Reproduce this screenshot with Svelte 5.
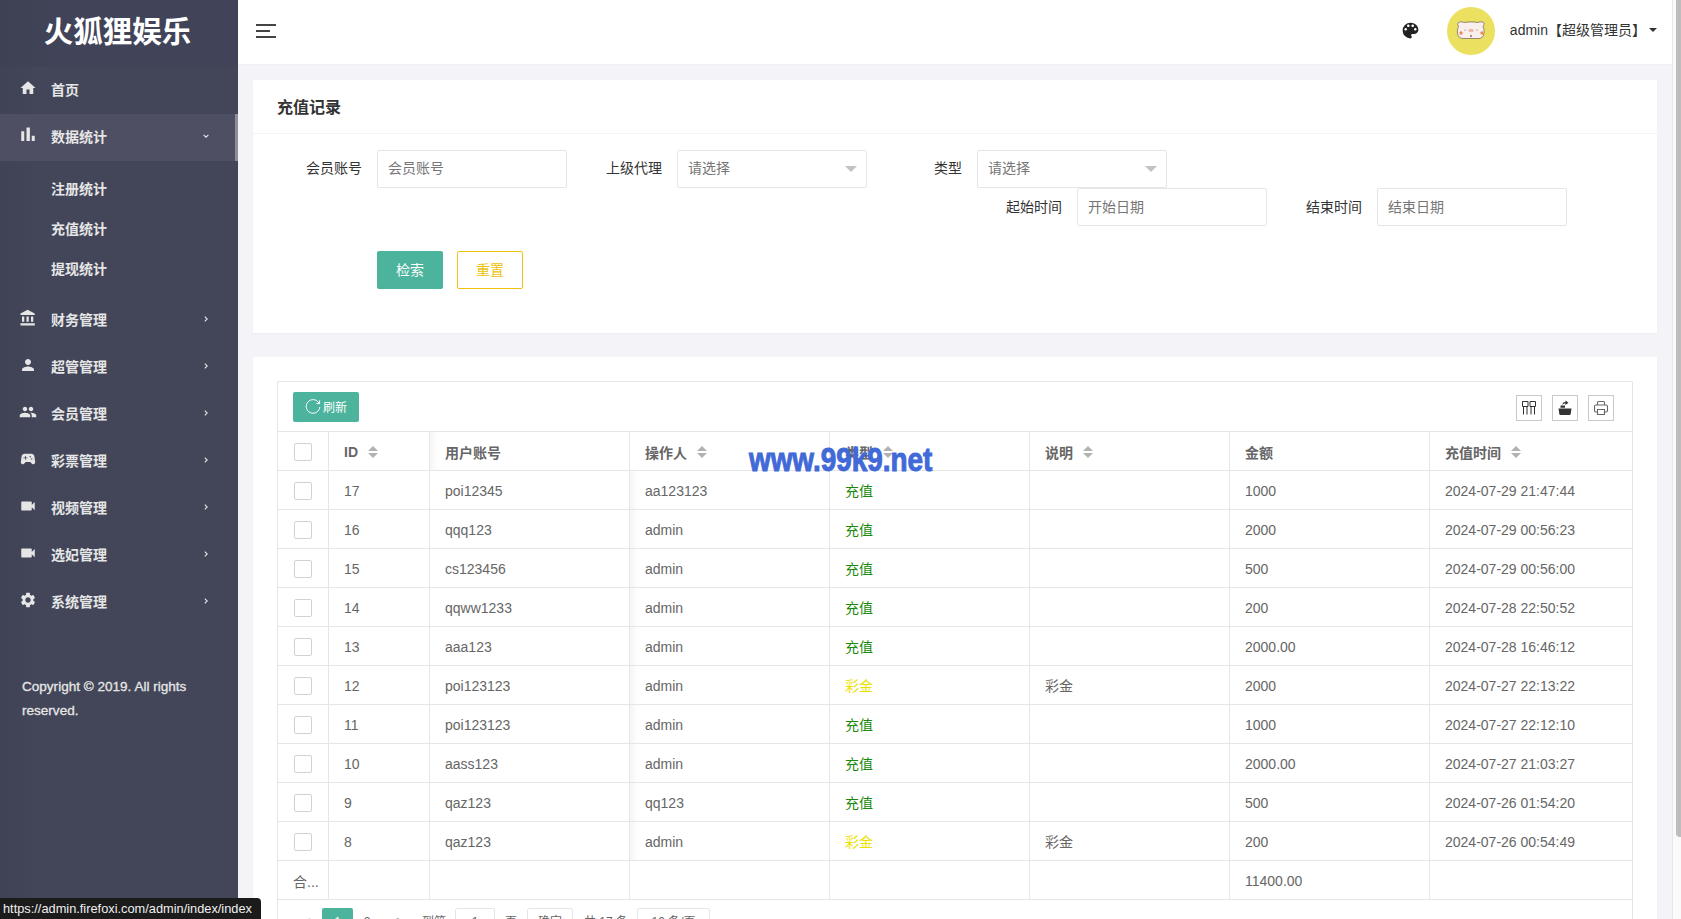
<script>
  const icons = {
    home: "M10 20v-6h4v6h5v-8h3L12 3 2 12h3v8z",
    chart: "M3 7h4v13H3zM10 2h4.500v18H10zM17 13h4v7h-4z",
    bank: "M4 10v7h3v-7H4zm6 0v7h3v-7h-3zM2 22h19v-3H2v3zm14-12v7h3v-7h-3zm-4.5-9L2 6v2h19V6l-9.5-5z",
    person: "M12 12c2.21 0 4-1.79 4-4s-1.79-4-4-4-4 1.79-4 4 1.79 4 4 4zm0 2c-2.67 0-8 1.34-8 4v2h16v-2c0-2.66-5.33-4-8-4z",
    people: "M16 11c1.66 0 2.99-1.34 2.99-3S17.66 5 16 5c-1.66 0-3 1.34-3 3s1.34 3 3 3zm-8 0c1.66 0 2.99-1.34 2.99-3S9.66 5 8 5C6.34 5 5 6.34 5 8s1.34 3 3 3zm0 2c-2.33 0-7 1.17-7 3.5V19h14v-2.5c0-2.33-4.67-3.5-7-3.5zm8 0c-.29 0-.62.02-.97.05 1.16.84 1.97 1.97 1.97 3.45V19h6v-2.5c0-2.33-4.67-3.5-7-3.5z",
    game: "M21.58 16.09l-1.09-7.66C20.21 6.46 18.52 5 16.53 5H7.47C5.48 5 3.79 6.46 3.51 8.43l-1.09 7.66C2.2 17.63 3.39 19 4.94 19c.68 0 1.32-.27 1.8-.75L9 16h6l2.25 2.25c.48.48 1.13.75 1.8.75 1.56 0 2.75-1.37 2.53-2.91zM11 11H9v2H8v-2H6v-1h2V8h1v2h2v1zm4-1c-.55 0-1-.45-1-1s.45-1 1-1 1 .45 1 1-.45 1-1 1zm2 3c-.55 0-1-.45-1-1s.45-1 1-1 1 .45 1 1-.45 1-1 1z",
    video: "M17 10.5V7c0-.55-.45-1-1-1H4c-.55 0-1 .45-1 1v10c0 .55.45 1 1 1h12c.55 0 1-.45 1-1v-3.5l4 4v-11l-4 4z",
    gear: "M19.14 12.94c.04-.3.06-.61.06-.94 0-.32-.02-.64-.07-.94l2.03-1.58c.18-.14.23-.41.12-.61l-1.92-3.32c-.12-.22-.37-.29-.59-.22l-2.39.96c-.5-.38-1.03-.7-1.62-.94l-.36-2.54c-.04-.24-.24-.41-.48-.41h-3.84c-.24 0-.43.17-.47.41l-.36 2.54c-.59.24-1.13.57-1.62.94l-2.39-.96c-.22-.08-.47 0-.59.22L2.74 8.87c-.12.21-.08.47.12.61l2.03 1.58c-.05.3-.09.63-.09.94s.02.64.07.94l-2.03 1.58c-.18.14-.23.41-.12.61l1.92 3.32c.12.22.37.29.59.22l2.39-.96c.5.38 1.03.7 1.62.94l.36 2.54c.05.24.24.41.48.41h3.84c.24 0 .44-.17.47-.41l.36-2.54c.59-.24 1.13-.56 1.62-.94l2.39.96c.22.08.47 0 .59-.22l1.92-3.32c.12-.22.07-.47-.12-.61l-2.01-1.58zM12 15.6c-1.98 0-3.6-1.62-3.6-3.6s1.62-3.6 3.6-3.6 3.6 1.62 3.6 3.6-1.62 3.6-3.6 3.6z"
  };

  const menu = [
    { name: "首页", icon: "home" },
    { name: "数据统计", icon: "chart", arrow: "down", active: true, sub: ["注册统计", "充值统计", "提现统计"] },
    { name: "财务管理", icon: "bank", arrow: "right" },
    { name: "超管管理", icon: "person", arrow: "right" },
    { name: "会员管理", icon: "people", arrow: "right" },
    { name: "彩票管理", icon: "game", arrow: "right" },
    { name: "视频管理", icon: "video", arrow: "right" },
    { name: "选妃管理", icon: "video", arrow: "right" },
    { name: "系统管理", icon: "gear", arrow: "right" }
  ];

  const columns = [
    { title: "ID", sort: true },
    { title: "用户账号" },
    { title: "操作人", sort: true },
    { title: "类型", sort: true },
    { title: "说明", sort: true },
    { title: "金额" },
    { title: "充值时间", sort: true }
  ];

  const rows = [
    [17, "poi12345", "aa123123", "充值", "", "1000", "2024-07-29 21:47:44"],
    [16, "qqq123", "admin", "充值", "", "2000", "2024-07-29 00:56:23"],
    [15, "cs123456", "admin", "充值", "", "500", "2024-07-29 00:56:00"],
    [14, "qqww1233", "admin", "充值", "", "200", "2024-07-28 22:50:52"],
    [13, "aaa123", "admin", "充值", "", "2000.00", "2024-07-28 16:46:12"],
    [12, "poi123123", "admin", "彩金", "彩金", "2000", "2024-07-27 22:13:22"],
    [11, "poi123123", "admin", "充值", "", "1000", "2024-07-27 22:12:10"],
    [10, "aass123", "admin", "充值", "", "2000.00", "2024-07-27 21:03:27"],
    [9, "qaz123", "qq123", "充值", "", "500", "2024-07-26 01:54:20"],
    [8, "qaz123", "admin", "彩金", "彩金", "200", "2024-07-26 00:54:49"]
  ];
</script>

<div class="shell">
  <aside class="sidebar">
    <div class="logo">火狐狸娱乐</div>
    <nav>
      {#each menu as item}
        <div class="item" class:active={item.active}>
          <svg class="icon" viewBox="0 0 24 24"><path d={icons[item.icon]} /></svg>
          <span>{item.name}</span>
          {#if item.arrow == "right"}
            <svg class="chev" viewBox="0 0 6 6"><path d="M1.8.6 4.2 3 1.8 5.4" /></svg>
          {:else if item.arrow == "down"}
            <svg class="chev" viewBox="0 0 6 6"><path d="M.6 1.8 3 4.2l2.4-2.4" /></svg>
          {/if}
        </div>
        {#if item.sub}
          <div class="sub">
            {#each item.sub as name}
              <div class="sub-item">{name}</div>
            {/each}
          </div>
        {/if}
      {/each}
    </nav>
    <p class="copyright">Copyright © 2019. All rights reserved.</p>
  </aside>

  <div class="main">
    <header class="topbar">
      <div class="burger"><i></i><i class="short"></i><i></i></div>
      <div class="top-right">
        <svg class="palette" viewBox="0 0 24 24"><path d="M12 3a9 9 0 0 0 0 18c.83 0 1.5-.67 1.5-1.5 0-.39-.15-.74-.39-1.01-.23-.26-.38-.61-.38-.99 0-.83.67-1.5 1.5-1.5H16c2.76 0 5-2.24 5-5 0-4.42-4.03-8-9-8zm-5.5 9c-.83 0-1.5-.67-1.5-1.5S5.67 9 6.5 9 8 9.67 8 10.5 7.33 12 6.5 12zm3-4C8.67 8 8 7.33 8 6.5S8.67 5 9.5 5s1.5.67 1.5 1.5S10.33 8 9.5 8zm5 0c-.83 0-1.5-.67-1.5-1.5S13.67 5 14.5 5s1.5.67 1.5 1.5S15.33 8 14.5 8zm3 4c-.83 0-1.5-.67-1.5-1.5S16.67 9 17.5 9s1.5.67 1.5 1.5-.67 1.5-1.5 1.5z" /></svg>
        <div class="avatar">
          <svg viewBox="0 0 48 48" width="48" height="48">
            <path d="M11 16c1-1.500 4-1.500 6-.5 4-.8 10-.8 14 0 2-1 5-1 6 .5.600 1-.4 2.500-1 3.500 1 2 1.500 5 1 7-.5 3-2.500 5-5 5H16c-3 0-5-2-5.500-5-.4-2 0-5 1-7-.6-1-1.100-2.500-.5-3.500z" fill="#f9efec" stroke="#6d5f56" stroke-width=".7" />
            <circle cx="14" cy="26" r="1.700" fill="#ef8a52" />
            <circle cx="35" cy="26" r="1.700" fill="#ef8a52" />
            <circle cx="18" cy="23" r=".6" fill="#666" />
            <circle cx="30" cy="23" r=".6" fill="#666" />
            <ellipse cx="24" cy="23.500" rx="2.800" ry="1.800" fill="#eeb8ae" />
            <ellipse cx="24" cy="29" rx="1" ry="1.200" fill="#9a8680" />
          </svg>
        </div>
        <span class="uname">admin【超级管理员】</span>
        <i class="caret"></i>
      </div>
    </header>

    <div class="content">
      <section class="card">
        <h2 class="card-title">充值记录</h2>
        <div class="form">
          <div class="form-row">
            <div class="field">
              <span class="label">会员账号</span>
              <input class="input" placeholder="会员账号" />
            </div>
            <div class="field">
              <span class="label">上级代理</span>
              <div class="select"><input class="input" placeholder="请选择" readonly /><i class="tri"></i></div>
            </div>
            <div class="field">
              <span class="label">类型</span>
              <div class="select"><input class="input" placeholder="请选择" readonly /><i class="tri"></i></div>
            </div>
          </div>
          <div class="form-row second">
            <div class="field">
              <span class="label">起始时间</span>
              <input class="input" placeholder="开始日期" />
            </div>
            <div class="field">
              <span class="label">结束时间</span>
              <input class="input" placeholder="结束日期" />
            </div>
          </div>
          <div class="actions">
            <button class="btn primary">检索</button>
            <button class="btn warn">重置</button>
          </div>
        </div>
      </section>

      <section class="card table-card">
        <div class="table-box">
          <div class="toolbar">
            <button class="refresh">
              <svg viewBox="0 0 16 16" width="16" height="16"><path d="M14 4.200A6.800 6.800 0 1 0 14.800 8" /><path d="M14.600 1.400v3.200h-3.200" /></svg>
              刷新
            </button>
            <div class="tools">
              <span class="tool">
                <svg viewBox="0 0 16 16"><path d="M1.500 1.500h5.500v5H1.500zM9 1.500h5.500v5H9zM2.500 6.500v8M6 6.500v8M10 6.500v8M13.500 6.500v8" fill="none" stroke="#333" /></svg>
              </span>
              <span class="tool">
                <svg viewBox="0 0 16 16"><path d="M1.500 8.500h13l-.8 5.500c-.1.600-.5 1-1.200 1h-9c-.7 0-1.100-.4-1.200-1zM3.500 5.500h4.500v2.200H3.500zM8.500 .5l3 2.200-3 2.200V3.500c-1.800 0-2.800.6-3.200 1.800C5.200 3.100 6.400 1.900 8.500 1.900z" fill="#333" /></svg>
              </span>
              <span class="tool">
                <svg viewBox="0 0 16 16"><path d="M4.500 5V2.500c0-.6.400-1 1-1h5c.6 0 1 .4 1 1V5M4.500 12H3c-1 0-1.500-.5-1.500-1.500V6.500c0-1 .5-1.500 1.500-1.500h10c1 0 1.500.5 1.500 1.500v4c0 1-.5 1.500-1.500 1.500h-1.500M4.500 9.500h7v5h-7z" fill="none" stroke="#666" stroke-width="1.100" /></svg>
              </span>
            </div>
          </div>
          <table>
            <colgroup>
              <col style="width:51px" /><col style="width:101px" /><col style="width:200px" /><col style="width:200px" /><col style="width:200px" /><col style="width:200px" /><col style="width:200px" /><col />
            </colgroup>
            <thead>
              <tr>
                <th><span class="check"></span></th>
                {#each columns as col}
                  <th>
                    <span class="th">{col.title}
                      {#if col.sort}<span class="sort"><i class="up"></i><i class="down"></i></span>{/if}
                    </span>
                  </th>
                {/each}
              </tr>
            </thead>
            <tbody>
              {#each rows as row}
                <tr>
                  <td><span class="check"></span></td>
                  <td>{row[0]}</td>
                  <td>{row[1]}</td>
                  <td class="after-fixed">{row[2]}</td>
                  <td class:green={row[3] == "充值"} class:yellow={row[3] == "彩金"}>{row[3]}</td>
                  <td class="note">{row[4]}</td>
                  <td>{row[5]}</td>
                  <td>{row[6]}</td>
                </tr>
              {/each}
              <tr>
                <td class="sum-label">合...</td>
                <td></td><td></td><td></td><td></td><td></td>
                <td>11400.00</td>
                <td></td>
              </tr>
            </tbody>
          </table>
          <div class="pager">
            <span class="pg prev">‹</span>
            <span class="pg cur">1</span>
            <span class="pg two">2</span>
            <span class="pg next">›</span>
            <span class="pg-text to">到第</span>
            <span class="pg-box page-no">1</span>
            <span class="pg-text unit">页</span>
            <span class="pg-box confirm">确定</span>
            <span class="pg-text total">共 17 条</span>
            <span class="pg-box per">10 条/页</span>
          </div>
        </div>
      </section>
    </div>
  </div>

  <div class="scrollbar"><div class="thumb"></div></div>

  <div class="watermark">www.99k9.net</div>
  <div class="status">https://admin.firefoxi.com/admin/index/index</div>
</div>

<style>
  :global(body) {
    margin: 0;
    background: #f3f3f8;
  }

  .shell {
    position: relative;
    display: flex;
    width: 1681px;
    height: 919px;
    overflow: hidden;
    font-family: "Liberation Sans", "Noto Sans CJK SC", sans-serif;
    font-size: 14px;
    color: #666;
  }

  /* sidebar */
  .sidebar {
    flex: none;
    width: 238px;
    background: linear-gradient(to right, #404356, #434659 40px);
    color: #e6e6e6;
  }

  .logo {
    height: 63px;
    padding: 0 3px 4px 0;
    line-height: 63px;
    text-align: center;
    font-size: 29.5px;
    font-weight: bold;
    color: #fff;
    background: linear-gradient(to right, #3e4154, #414458 60px);
  }

  .item {
    display: flex;
    align-items: center;
    height: 47px;
    padding-left: 19px;
    font-weight: bold;
  }

  .item.active {
    background: #4e4f63;
    box-shadow: inset -3px 0 0 #8d8e99;
  }

  .item span {
    margin-left: 14px;
    padding-bottom: 3px;
  }

  .icon {
    width: 18px;
    height: 18px;
    margin-bottom: 5px;
    fill: #e6e6e6;
  }

  .chev {
    width: 6px;
    height: 6px;
    margin-left: auto;
    margin-right: 29px;
    margin-bottom: 3px;
    fill: none;
    stroke: #e6e6e6;
    stroke-width: 1.1;
  }

  .sub {
    padding: 8px 0;
  }

  .sub-item {
    height: 40px;
    line-height: 40px;
    padding-left: 51px;
    font-weight: bold;
  }

  .copyright {
    margin: 49px 22px 0;
    line-height: 24px;
    font-size: 13.56px;
    color: #e6e6e6;
    -webkit-text-stroke: 0.3px #e6e6e6;
  }

  /* top bar */
  .main {
    flex: 1;
    min-width: 0;
  }

  .topbar {
    display: flex;
    align-items: center;
    height: 65px;
    padding: 0 15px 0 18px;
    background: #fff;
    box-sizing: border-box;
    border-bottom: 1px solid #f0f0f3;
  }

  .burger {
    display: flex;
    flex-direction: column;
    gap: 4px;
    width: 20px;
    margin-bottom: 3px;
  }

  .burger i {
    height: 2px;
    background: #444;
  }

  .burger .short {
    width: 14px;
  }

  .top-right {
    display: flex;
    align-items: center;
    margin-left: auto;
    color: #333;
  }

  .palette {
    width: 21px;
    height: 21px;
    fill: #222;
    margin-right: 26px;
    margin-bottom: 3px;
  }

  .avatar {
    width: 48px;
    height: 48px;
    margin-right: 15px;
    margin-bottom: 3px;
    border-radius: 50%;
    background: #ece060;
  }

  .avatar svg {
    display: block;
  }

  .uname {
    margin-bottom: 6px;
  }

  .caret {
    width: 0;
    height: 0;
    margin-left: 3px;
    margin-bottom: 4px;
    border: 4px solid transparent;
    border-top-color: #333;
    border-bottom: 0;
  }

  /* cards */
  .content {
    display: flex;
    flex-direction: column;
    gap: 24px;
    padding: 15px;
  }

  .card {
    background: #fff;
    box-shadow: 0 1px 2px rgba(0, 0, 0, 0.03);
  }

  .card-title {
    margin: 0;
    height: 53px;
    padding-left: 24px;
    line-height: 55px;
    font-size: 16px;
    font-weight: bold;
    color: #333;
    border-bottom: 1px solid #f4f4f6;
  }

  .form {
    box-sizing: border-box;
    height: 199px;
    padding: 16px 0 0 14px;
  }

  .form-row {
    display: flex;
  }

  .form-row.second {
    margin-left: 700px;
  }

  .field {
    display: flex;
    width: 300px;
  }

  .label {
    width: 95px;
    padding-right: 15px;
    line-height: 36px;
    text-align: right;
    color: #333;
  }

  .second .label {
    line-height: 38px;
  }

  .input {
    display: block;
    width: 190px;
    height: 38px;
    padding: 0 10px 2px;
    box-sizing: border-box;
    border: 1px solid #e6e6e6;
    border-radius: 2px;
    font: inherit;
    color: #333;
    background: #fff;
    outline: none;
  }

  .second .input {
    padding-bottom: 0;
  }

  .input::placeholder {
    color: #767676;
    opacity: 1;
  }

  .select {
    position: relative;
  }

  .tri {
    position: absolute;
    top: 16px;
    right: 10px;
    border: 6px solid transparent;
    border-top-color: #c2c2c2;
    border-bottom: 0;
  }

  .actions {
    display: flex;
    gap: 14px;
    margin: 25px 0 0 110px;
  }

  .btn {
    width: 66px;
    height: 38px;
    padding: 0 0 2px;
    border-radius: 2px;
    font: inherit;
  }

  .primary {
    border: 0;
    background: #4cb39c;
    color: #fff;
  }

  .warn {
    border: 1px solid #eec20e;
    background: #fff;
    color: #eec20e;
  }

  /* table */
  .table-card {
    padding: 24px 24px 0;
  }

  .table-box {
    border: 1px solid #e6e6e6;
    border-bottom: 0;
  }

  .toolbar {
    display: flex;
    align-items: center;
    justify-content: space-between;
    height: 50px;
    padding: 0 18px 0 15px;
    box-sizing: border-box;
    border-bottom: 1px solid #e6e6e6;
  }

  .refresh {
    display: flex;
    align-items: center;
    justify-content: center;
    gap: 2px;
    width: 66px;
    height: 30px;
    padding: 0;
    border: 0;
    border-radius: 2px;
    background: #4cb39c;
    color: #fff;
    font: inherit;
    font-size: 12px;
  }

  .refresh svg {
    fill: none;
    stroke: #fff;
    stroke-width: 1;
  }

  .tools {
    display: flex;
    gap: 10px;
    margin-top: 2px;
  }

  .tool {
    display: flex;
    align-items: center;
    justify-content: center;
    width: 26px;
    height: 26px;
    box-sizing: border-box;
    border: 1px solid #c9c9c9;
  }

  .tool svg {
    width: 16px;
    height: 16px;
  }

  table {
    width: 100%;
    table-layout: fixed;
    border-collapse: separate;
    border-spacing: 0;
  }

  th, td {
    height: 36px;
    padding: 2px 15px 0;
    box-sizing: content-box;
    border-bottom: 1px solid #e6e6e6;
    border-right: 1px solid #e6e6e6;
    text-align: left;
    font-weight: normal;
    white-space: nowrap;
    overflow: hidden;
  }

  th {
    height: 37px;
    padding-top: 1px;
    font-weight: bold;
  }

  th:last-child, td:last-child {
    border-right: 0;
  }

  td:first-child, th:first-child {
    padding-left: 16px;
    padding-right: 0;
  }

  .after-fixed, th:nth-child(3) {
    background: linear-gradient(to right, rgba(0, 0, 0, 0.04), transparent 8px);
  }

  .th {
    display: flex;
    align-items: center;
    gap: 10px;
  }

  .sort {
    display: inline-flex;
    flex-direction: column;
    gap: 2px;
  }

  .sort i {
    width: 0;
    height: 0;
    border: 5px solid transparent;
  }

  .sort .up {
    border-bottom-color: #b2b2b2;
    border-top: 0;
  }

  .sort .down {
    border-top-color: #b2b2b2;
    border-bottom: 0;
  }

  .check {
    display: block;
    width: 18px;
    height: 18px;
    box-sizing: border-box;
    border: 1px solid #d2d2d2;
    border-radius: 2px;
  }

  td.green, td.yellow, td.note {
    height: 38px;
    padding-top: 0;
  }

  .green {
    color: #1a8a0a;
  }

  .yellow {
    color: #ece100;
  }

  td.sum-label {
    padding-left: 15px;
    padding-right: 0;
  }

  /* pager */
  .pager {
    display: flex;
    align-items: center;
    height: 28px;
    margin-top: 8px;
    padding-left: 15px;
    font-size: 12px;
    color: #666;
  }

  .pg {
    display: block;
    height: 28px;
    line-height: 28px;
    text-align: center;
  }

  .prev {
    width: 29px;
    color: #c2c2c2;
    font-size: 24px;
  }

  .cur {
    width: 31px;
    background: #4cb39c;
    color: #fff;
    border-radius: 2px;
  }

  .two {
    width: 28px;
  }

  .next {
    width: 37px;
    font-size: 24px;
  }

  .pg-text {
    line-height: 28px;
    white-space: nowrap;
  }

  .to {
    margin-left: 4px;
    width: 33px;
  }

  .pg-box {
    height: 28px;
    line-height: 26px;
    box-sizing: border-box;
    border: 1px solid #e6e6e6;
    border-radius: 2px;
    text-align: center;
    white-space: nowrap;
  }

  .page-no {
    width: 40px;
  }

  .unit {
    width: 32px;
    text-align: center;
  }

  .confirm {
    width: 46px;
  }

  .total {
    width: 53px;
    margin-left: 11px;
  }

  .per {
    width: 73px;
  }

  /* page scrollbar */
  .scrollbar {
    flex: none;
    width: 9px;
    box-sizing: border-box;
    padding-left: 3px;
    background: #fafafa;
    border-left: 1px solid #e8e8e8;
  }

  .thumb {
    height: 837px;
    background: #bdbdbd;
    border-radius: 0 0 0 4px;
  }

  /* things that sit on top of the page */
  .watermark {
    position: absolute;
    left: 749px;
    top: 439px;
    font-size: 34px;
    font-weight: bold;
    line-height: 40px;
    color: #4169d8;
    -webkit-text-stroke: 1px #4169d8;
    white-space: nowrap;
    transform: scaleX(0.82);
    transform-origin: left center;
  }

  .status {
    position: absolute;
    left: 0;
    bottom: 0;
    width: 261px;
    height: 21px;
    box-sizing: border-box;
    padding-left: 3px;
    line-height: 22px;
    font-size: 12.8px;
    color: #f0f0f0;
    background: #1b1b1b;
    border-radius: 0 4px 0 0;
    white-space: nowrap;
    overflow: hidden;
  }
</style>
